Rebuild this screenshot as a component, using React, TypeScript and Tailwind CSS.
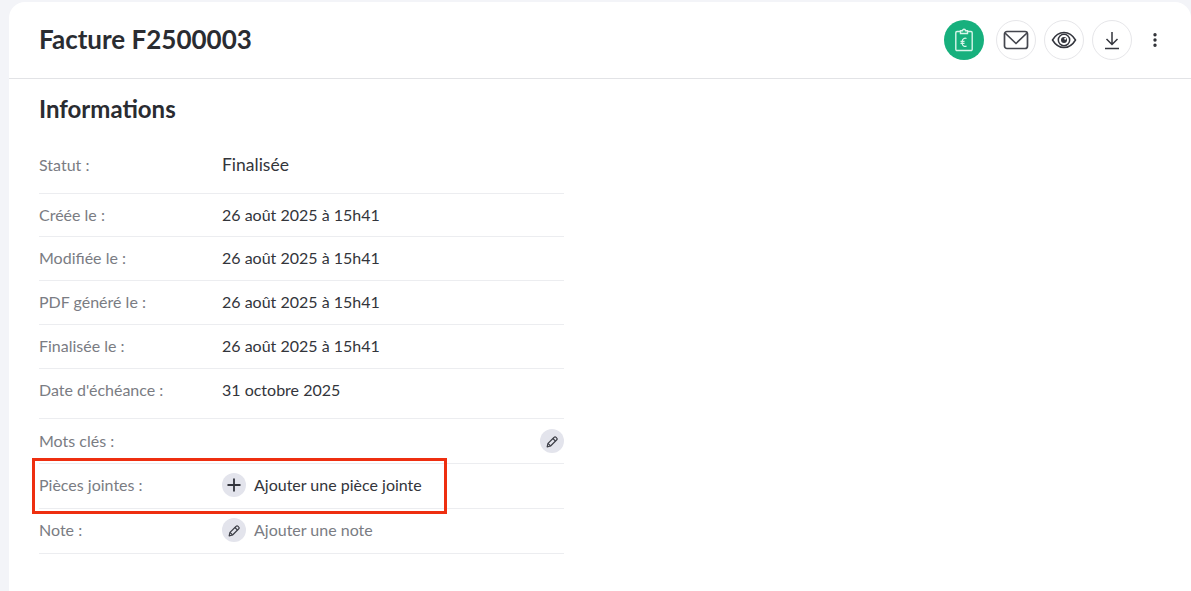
import { Plus, MoreVertical } from "lucide-react";
import type { ReactNode } from "react";

function PencilIcon() {
  return (
    <svg width="15" height="15" viewBox="0 0 14 14" fill="none" stroke="currentColor" strokeWidth="1.100" strokeLinejoin="round">
      <path d="M2 12l.8-3.200L8.600 3a1.100 1.100 0 0 1 1.600 0l.8.8a1.100 1.100 0 0 1 0 1.600L5.200 11.200z" />
      <path d="M7.400 4.200l2.400 2.400M2.800 8.800l2.400 2.400" />
    </svg>
  );
}

function PencilBadge() {
  return (
    <span className="flex h-6 w-6 shrink-0 items-center justify-center rounded-full bg-[#e3e4ec] text-[#3b3d45]">
      <PencilIcon />
    </span>
  );
}

function RoundButton({ children, green }: { children: ReactNode; green?: boolean }) {
  return (
    <button
      className={
        green
          ? "flex h-10 w-10 items-center justify-center rounded-full bg-[#17b07d] text-[#d8f5ea]"
          : "flex h-10 w-10 items-center justify-center rounded-full border border-[#e6e6e9] bg-white text-[#33353d]"
      }
    >
      {children}
    </button>
  );
}

function Row({ label, children, className }: { label: string; children?: ReactNode; className: string }) {
  return (
    <div className={`flex border-b border-[#ecedf0] ${className}`}>
      <div className="w-[183px] shrink-0 text-[16px] leading-[22px] text-[#7a7c83]">{label}</div>
      <div className="flex flex-1 items-center text-[16px] leading-[22px] text-[#33353b]">{children}</div>
    </div>
  );
}

const dateRows = [
  { label: "Créée le :", value: "26 août 2025 à 15h41", height: "h-[43px]" },
  { label: "Modifiée le :", value: "26 août 2025 à 15h41", height: "h-[44px] pb-[2px]" },
  { label: "PDF généré le :", value: "26 août 2025 à 15h41", height: "h-[44px] pb-[2px]" },
  { label: "Finalisée le :", value: "26 août 2025 à 15h41", height: "h-[44px] pb-[2px]" },
];

export default function App() {
  return (
    <div className="h-[591px] overflow-hidden bg-[#f3f4f8] pt-[2px] pl-[9px] font-['Lato',sans-serif]">
      <div className="relative h-full rounded-tl-2xl rounded-tr-2xl bg-white">
        {/* Header */}
        <div className="flex h-[77px] items-center justify-between border-b border-[#e2e3e6] pl-[30px] pr-[24px]">
          <h1 className="pb-[2px] text-[26px] font-bold text-[#2a2c31]">Facture F2500003</h1>
          <div className="flex items-center">
            <RoundButton green>
              <svg width="20" height="24" viewBox="0 0 20 24" fill="none" stroke="currentColor" strokeWidth="1.400">
                <path d="M6.500 3.500H3a1.200 1.200 0 0 0-1.200 1.200v16.600A1.200 1.200 0 0 0 3 22.500h14a1.200 1.200 0 0 0 1.200-1.200V4.700A1.200 1.200 0 0 0 17 3.500h-3.500" />
                <path d="M6.500 5.500V2.800h2a1.500 1.500 0 0 1 3 0h2v2.700z" />
                <path d="M12.500 10.500a3 3 0 0 0-4.300 2.700v2.200a3 3 0 0 0 4.300 2.700M6.500 13.300h4M6.500 15.300h4" strokeWidth="1.200" />
              </svg>
            </RoundButton>
            <div className="ml-3 flex items-center gap-2">
              <RoundButton>
                <svg width="26" height="20" viewBox="0 0 26 20" fill="none" stroke="#44464e" strokeWidth="1.700" strokeLinejoin="round">
                  <rect x="1.500" y="1.500" width="23" height="17" rx="2.500" />
                  <path d="M2 3l11 10.500L24 3" />
                </svg>
              </RoundButton>
              <RoundButton>
                <svg width="26" height="20" viewBox="0 0 26 20" fill="none" stroke="currentColor">
                  <path d="M1.500 10C4.500 5 8.500 2.500 13 2.500S21.500 5 24.500 10C21.500 15 17.500 17.500 13 17.500S4.500 15 1.500 10z" strokeWidth="1.500" />
                  <circle cx="13" cy="10" r="5.700" strokeWidth="1.500" />
                  <circle cx="13" cy="10" r="3" fill="currentColor" stroke="none" />
                  <circle cx="14.200" cy="8.800" r="1" fill="#ffffff" stroke="none" />
                </svg>
              </RoundButton>
              <RoundButton>
                <svg width="18" height="20" viewBox="0 0 18 20" fill="none" stroke="currentColor" strokeWidth="1.500">
                  <path d="M9 2v12M3.500 9 9 14.500 14.500 9M2 18.500h14" />
                </svg>
              </RoundButton>
            </div>
            <span className="ml-[11px] flex w-6 items-center justify-center text-[#2b2d33]">
              <MoreVertical size={18} strokeWidth={2.500} />
            </span>
          </div>
        </div>

        {/* Informations */}
        <div className="w-[555px] pl-[30px]">
          <h2 className="mt-[16px] text-[24px] font-bold leading-[28px] text-[#2a2c31]">Informations</h2>
          <div className="mt-[16px]">
            <Row label="Statut :" className="h-[55px] items-center pb-[2px]">
              <span className="text-[17.500px]">Finalisée</span>
            </Row>
            {dateRows.map((r) => (
              <Row key={r.label} label={r.label} className={`${r.height} items-center`}>
                {r.value}
              </Row>
            ))}
            <Row label="Date d'échéance :" className="h-[50px] pt-[10px]">
              <span className="self-start">31 octobre 2025</span>
            </Row>
            <Row label="Mots clés :" className="h-[45px] items-center">
              <span className="ml-auto">
                <PencilBadge />
              </span>
            </Row>
            <Row label="Pièces jointes :" className="h-[45px] items-center pb-[2px]">
              <span className="mr-2 flex h-6 w-6 items-center justify-center rounded-full bg-[#e3e4ec] text-[#33353d]">
                <Plus size={20} strokeWidth={2.200} />
              </span>
              Ajouter une pièce jointe
            </Row>
            <Row label="Note :" className="h-[45px] items-center pb-[2px]">
              <span className="mr-2">
                <PencilBadge />
              </span>
              <span className="text-[#7a7c83]">Ajouter une note</span>
            </Row>
          </div>
        </div>

        {/* Annotation overlay */}
        <div className="absolute left-[23px] top-[456px] h-[56px] w-[415px] border-[3px] border-[#ee2f10]" />
      </div>
    </div>
  );
}
